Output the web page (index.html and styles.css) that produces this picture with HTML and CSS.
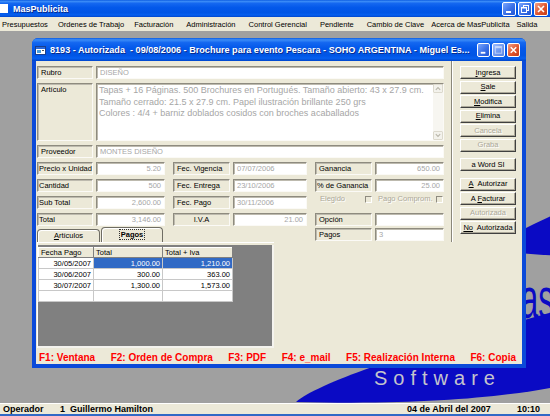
FILE: index.html
```html
<!DOCTYPE html>
<html lang="es">
<head>
  <meta charset="UTF-8">
  <title>MasPublicita</title>
  <link rel="stylesheet" href="styles.css">
</head>
<body>
<div class="app">
  <!-- main window caption -->
  <div class="titlebar">
    <span class="app-icon"></span>
    <span class="app-title">MasPublicita</span>
    <div class="caption-btns">
      <span class="cap"><svg viewBox="0 0 12 12"><rect x="3" y="8" width="5" height="2" fill="#fff"/></svg></span>
      <span class="cap"><svg viewBox="0 0 12 12"><rect x="4.5" y="2.5" width="5" height="5" fill="none" stroke="#fff"/><rect x="2.5" y="4.5" width="5" height="5" fill="#3a70e6" stroke="#fff"/><rect x="2.5" y="4" width="5" height="1.5" fill="#fff"/></svg></span>
      <span class="cap close"><svg viewBox="0 0 12 12"><path d="M3 3 L9 9 M9 3 L3 9" stroke="#fff" stroke-width="1.6"/></svg></span>
    </div>
  </div>

  <div class="menubar">
    <span>Presupuestos</span>
    <span>Ordenes de Trabajo</span>
    <span>Facturación</span>
    <span class="wide">Administración</span>
    <span class="wide">Control Gerencial</span>
    <span class="wide">Pendiente</span>
    <span class="wide">Cambio de Clave</span>
    <span class="near">Acerca de MasPublicita</span>
    <span class="near">Salida</span>
  </div>

  <div class="mdi">
    <svg class="wallpaper" viewBox="0 31 550 372">
      <path d="M518 232 C532 225 546 218 560 212 L560 256 C546 255 532 254 518 253 Z" fill="#0a0ac4"/>
      <text transform="translate(494 318) scale(0.55 1)" font-family="Liberation Sans, sans-serif" font-size="58" fill="#0a0ac4">Mas</text>
      <path d="M296 402 C322 380 430 346 560 310 L560 386 C500 398 420 405 296 402 Z" fill="#0a0ac4"/>
      <text x="374" y="385" font-family="Liberation Sans, sans-serif" font-size="20" letter-spacing="6" fill="#c4c4cc">Software</text>
    </svg>

    <!-- child window -->
    <div class="win">
      <div class="win-title">
        <svg class="win-icon" viewBox="0 0 11 11">
          <rect x="0.5" y="1.5" width="10" height="8" fill="#fff" stroke="#1c3f8c"/>
          <rect x="1" y="2" width="9" height="2" fill="#2b68d8"/>
          <rect x="2" y="5" width="4" height="3" fill="#4aa0e0"/>
          <rect x="7" y="5" width="2" height="1" fill="#555"/>
        </svg>
        <span class="win-caption">8193 - Autorizada&nbsp; - 09/08/2006 - Brochure para evento Pescara - SOHO ARGENTINA - Miguel Es...</span>
        <div class="caption-btns">
          <span class="cap"><svg viewBox="0 0 12 12"><rect x="3" y="8" width="5" height="2" fill="#fff"/></svg></span>
          <span class="cap dim"><svg viewBox="0 0 12 12"><rect x="2.5" y="2.5" width="7" height="7" fill="none" stroke="#fff"/><rect x="2.5" y="2" width="7" height="2" fill="#fff"/></svg></span>
          <span class="cap close"><svg viewBox="0 0 12 12"><path d="M3 3 L9 9 M9 3 L3 9" stroke="#fff" stroke-width="1.6"/></svg></span>
        </div>
      </div>

      <div class="win-body">
        <div class="upper">
          <div class="form">
            <div class="row">
              <span class="lbl">Rubro</span><span class="fld wide">DISEÑO</span>
            </div>
            <div class="row memo-row">
              <span class="lbl">Artículo</span>
              <div class="fld wide memo">
                <div class="memo-text">Tapas + 16 Páginas. 500 Brochures en Portugués. Tamaño abierto: 43 x 27.9 cm.<br>Tamaño cerrado: 21.5 x 27.9 cm. Papel ilustración brillante 250 grs<br>Colores : 4/4 + barniz doblados cosidos con broches acaballados</div>
                <div class="vscroll">
                  <span class="sb-btn"><svg viewBox="0 0 8 8"><path d="M1.5 5.5 L4 3 L6.5 5.5" fill="none" stroke="#b9b6aa" stroke-width="1.3"/></svg></span>
                  <span class="sb-track"></span>
                  <span class="sb-btn"><svg viewBox="0 0 8 8"><path d="M1.5 2.5 L4 5 L6.5 2.5" fill="none" stroke="#b9b6aa" stroke-width="1.3"/></svg></span>
                </div>
              </div>
            </div>
            <div class="row">
              <span class="lbl">Proveedor</span><span class="fld wide">MONTES DISEÑO</span>
            </div>
            <div class="row">
              <span class="lbl tight">Precio x Unidad</span><span class="fld num">5.20</span>
              <span class="lbl mid">Fec. Vigencia</span><span class="fld date">07/07/2006</span>
              <span class="lbl mid">Ganancia</span><span class="fld num">650.00</span>
            </div>
            <div class="row">
              <span class="lbl tight">Cantidad</span><span class="fld num">500</span>
              <span class="lbl mid">Fec. Entrega</span><span class="fld date">23/10/2006</span>
              <span class="lbl mid tight">% de Ganancia</span><span class="fld num">25.00</span>
            </div>
            <div class="row">
              <span class="lbl tight">Sub Total</span><span class="fld num">2,600.00</span>
              <span class="lbl mid">Fec. Pago</span><span class="fld date">30/11/2006</span>
              <div class="checks">
                <span class="chk">Elegido <i class="box"></i></span>
                <span class="chk second">Pago Comprom. <i class="box"></i></span>
              </div>
            </div>
            <div class="row">
              <span class="lbl tight">Total</span><span class="fld num">3,146.00</span>
              <span class="lbl mid center">I.V.A</span><span class="fld date num">21.00</span>
              <span class="lbl mid">Opción</span><span class="fld"></span>
            </div>
            <div class="row last">
              <div class="tabs">
                <span class="tab"><u>A</u>rtículos</span>
                <span class="tab on"><span class="focus">Pagos</span></span>
              </div>
              <span class="lbl push">Pagos</span><span class="fld">3</span>
            </div>
          </div>

          <div class="sep"></div>

          <div class="btns">
            <button class="btn"><u>I</u>ngresa</button>
            <button class="btn"><u>S</u>ale</button>
            <button class="btn"><u>M</u>odifica</button>
            <button class="btn"><u>E</u>limina</button>
            <button class="btn off">Cancela</button>
            <button class="btn off">Graba</button>
            <button class="btn space">a Word SI</button>
            <button class="btn space"><u>A</u>&nbsp; Autorizar</button>
            <button class="btn">A <u>F</u>acturar</button>
            <button class="btn off">Autorizada</button>
            <button class="btn"><u>No</u>&nbsp; Autorizada</button>
          </div>
        </div>

        <div class="tabpanel">
          <div class="grid-area">
            <table class="grid">
              <colgroup><col class="c1"><col class="c2"><col class="c3"></colgroup>
              <tr><th>Fecha Pago</th><th>Total</th><th>Total + Iva</th></tr>
              <tr><td>30/05/2007</td><td class="sel">1,000.00</td><td class="sel">1,210.00</td></tr>
              <tr><td>30/06/2007</td><td>300.00</td><td>363.00</td></tr>
              <tr><td>30/07/2007</td><td>1,300.00</td><td>1,573.00</td></tr>
              <tr><td></td><td></td><td></td></tr>
            </table>
          </div>
        </div>

        <div class="fkeys">
          <span>F1: Ventana</span>
          <span>F2: Orden de Compra</span>
          <span>F3: PDF</span>
          <span>F4: e_mail</span>
          <span>F5: Realización Interna</span>
          <span>F6: Copia</span>
        </div>
      </div>
    </div>
  </div>

  <div class="statusbar">
    <span class="sb-op">Operador</span>
    <span class="sb-user">1&nbsp; Guillermo Hamilton</span>
    <span class="sb-date">04 de Abril del 2007</span>
    <span class="sb-time">10:10</span>
  </div>
</div>
</body>
</html>
```

FILE: styles.css
```css
* { margin: 0; padding: 0; box-sizing: border-box; }
html, body { width: 550px; height: 416px; overflow: hidden; }
body {
  font-family: "Liberation Sans", Arial, sans-serif;
  font-size: 7.5px;
  color: #000;
  background: #ece9d8;
}
.app { display: flex; flex-direction: column; height: 416px; }

/* XP caption bars */
.titlebar, .win-title {
  display: flex;
  align-items: center;
  color: #fff;
  background: linear-gradient(to bottom, #0a5ae0 0%, #3b8cf7 8%, #1467f0 20%, #0358ea 45%, #0055e5 75%, #0660f0 88%, #0046cc 100%);
}
.titlebar { height: 17px; }
.app-icon { width: 8px; height: 9px; background: #fff; margin-right: 5px; }
.app-title { flex: 1; font-size: 9px; font-weight: bold; text-shadow: 1px 1px 0 #0a2a8a; }
.caption-btns { display: flex; gap: 2px; padding-right: 2px; }
.cap {
  display: flex;
  width: 14px;
  height: 14px;
  border: 1px solid #fff;
  border-radius: 2px;
  background: linear-gradient(135deg, #7aa6ff 0%, #3a70e6 55%, #2256d4 100%);
}
.cap svg { width: 100%; height: 100%; }
.cap.close { background: linear-gradient(135deg, #f2a088 0%, #e0572f 55%, #c43a16 100%); }
.cap.dim { background: linear-gradient(135deg, #9dbcff 0%, #6b95ee 60%, #5a86e6 100%); }
.cap.dim svg { opacity: 0.55; }

/* menu */
.menubar { height: 14px; display: flex; align-items: center; gap: 10px; padding-left: 2px; background: #ece9d8; }
.menubar .wide { margin-left: 3px; }
.menubar .near { margin-left: -3px; }

/* MDI client */
.mdi { flex: 1; position: relative; background: #a0a0a0; overflow: hidden; }
.wallpaper { position: absolute; left: 0; top: 0; width: 550px; height: 372px; }

/* child window */
.win {
  position: absolute;
  left: 32px;
  top: 7px;
  width: 494px;
  height: 330px;
  display: flex;
  flex-direction: column;
  border-radius: 6px 6px 0 0;
  overflow: hidden;
  background: #0b4ad9;
}
.win-title { height: 23px; padding: 1px 4px 0 3px; }
.win-icon { width: 11px; height: 11px; margin-right: 4px; }
.win-caption {
  flex: 1;
  font-size: 9.1px;
  font-weight: bold;
  white-space: nowrap;
  overflow: hidden;
  text-shadow: 1px 1px 0 #0a2a8a;
}
.win-title .cap { width: 13px; }
.win-body {
  margin: 0 4px 4px;
  height: 303px;
  background: #ece9d8;
  display: flex;
  flex-direction: column;
}

.upper { display: flex; height: 181px; flex-shrink: 0; }
.form { width: 415px; padding: 5px 7px 0 1px; display: flex; flex-direction: column; gap: 4px; }

.row { display: flex; gap: 3px; height: 13px; flex-shrink: 0; }
.lbl, .fld {
  border: 1px solid;
  border-color: #8e8b7f #fbfaf6 #fbfaf6 #8e8b7f;
  box-shadow: inset 1px 1px 0 #bdbaae;
  line-height: 11px;
  padding: 0 3px;
  white-space: nowrap;
  overflow: hidden;
}
.lbl { width: 56px; background: #ece9d8; }
.lbl.mid { width: 57px; margin-left: 5px; }
.lbl.tight { padding-left: 1px; padding-right: 0; }
.lbl.center { text-align: center; }
.lbl.push { margin-left: auto; width: 57px; }
.fld { width: 69px; background: #fff; color: #a6a6a6; }
.fld.date { width: 74px; }
.fld.wide { width: 348px; }
.num { text-align: right; }

.memo-row { height: 58px; }
.memo { display: flex; padding: 0; }
.memo-text { flex: 1; padding: 1px 2px; font-size: 9px; line-height: 11.5px; white-space: nowrap; overflow: hidden; }
.vscroll { width: 10px; display: flex; flex-direction: column; }
.sb-btn { height: 9px; display: flex; background: #f3f2ec; border: 1px solid #dcd9cd; border-radius: 1px; }
.sb-btn svg { width: 100%; height: 100%; }
.sb-track { flex: 1; background: #f7f6f1; }

.checks {
  margin-left: 5px;
  width: 129px;
  height: 10px;
  margin-top: -3px;
  display: flex;
  align-items: center;
  color: #aca899;
  text-shadow: 1px 1px 0 #fff;
}
.chk { display: flex; align-items: center; justify-content: space-between; width: 57px; padding-left: 5px; }
.chk.second { width: 65px; margin-left: 6px; padding-left: 0; }
.box {
  width: 7px;
  height: 7px;
  margin-top: 3px;
  background: #ece9d8;
  border: 1px solid;
  border-color: #8e8b7f #fff #fff #8e8b7f;
}

.row.last { height: 14px; margin-top: -2px; }
.row.last .lbl, .row.last .fld { height: 13px; }
.tabs { display: flex; align-items: flex-end; gap: 1px; height: 14px; }
.tab {
  width: 63px;
  height: 13px;
  background: #ece9d8;
  border: 1px solid #6f6d64;
  border-bottom: none;
  border-radius: 4px 4px 0 0;
  box-shadow: inset 1px 1px 0 #fff;
  text-align: center;
  line-height: 12px;
}
.tab.on { width: 62px; height: 15px; font-weight: bold; line-height: 13px; }
.focus { border: 1px dotted #333; padding: 0 1px; }

.sep { width: 2px; border-left: 1px solid #8a877a; border-right: 1px solid #fff; }
.btns { padding: 5px 0 0 7px; display: flex; flex-direction: column; }
.btn {
  width: 56px;
  height: 13px;
  margin-bottom: 1.5px;
  font: inherit;
  color: #000;
  background: #ece9d8;
  border: 1px solid;
  border-color: #fff #404040 #404040 #fff;
  box-shadow: inset -1px -1px 0 #aca899;
  line-height: 10px;
  text-align: center;
}
.btn.off { color: #aca899; text-shadow: 1px 1px 0 #fff; }
.btn.space { margin-top: 5px; }

/* pagos tab page */
.tabpanel {
  margin-left: 1px;
  width: 237px;
  height: 106px;
  flex-shrink: 0;
  border-top: 1px solid #fff;
  border-left: 1px solid #fff;
  padding-top: 2px;
}
.grid-area {
  height: 100%;
  background: #808080;
  border-right: 2px solid #f4f3ee;
  border-bottom: 2px solid #f4f3ee;
  padding-top: 2px;
}
.grid {
  border-collapse: collapse;
  table-layout: fixed;
  background: #fff;
  border-right: 1px solid #303030;
  border-bottom: 1px solid #303030;
}
.grid .c1 { width: 55px; }
.grid .c2 { width: 69px; }
.grid .c3 { width: 70px; }
.grid th, .grid td {
  height: 11px;
  padding: 0 2px;
  line-height: 9px;
  border: 1px solid #c8c8c8;
  white-space: nowrap;
  font-weight: normal;
}
.grid th { height: 10px; text-align: left; background: #ece9d8; border-color: #fff #808080 #808080 #fff; }
.grid td { text-align: right; }
.grid td.sel { background: #316ac5; color: #fff; }

.fkeys {
  display: flex;
  justify-content: space-between;
  margin-top: 4px;
  padding: 0 6px 0 3px;
  height: 12px;
  line-height: 12px;
  font-size: 10px;
  font-weight: bold;
  color: #f00;
}

/* status bar */
.statusbar {
  height: 13px;
  display: flex;
  align-items: center;
  padding-left: 3px;
  font-size: 9px;
  font-weight: bold;
  background: #ece9d8;
  border-top: 1px solid #fff;
  border-bottom: 2px solid #3169c6;
}
.sb-op { width: 57px; }
.sb-user { flex: 1; }
.sb-date { width: 110px; }
.sb-time { width: 33px; }
```
